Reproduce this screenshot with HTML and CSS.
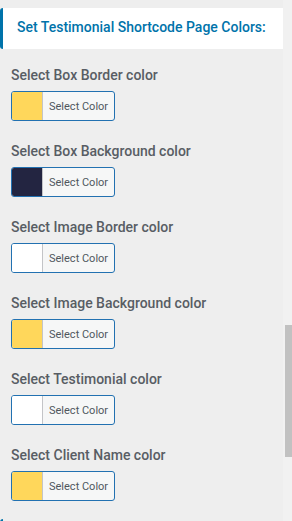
FILE: index.html
```html
<!DOCTYPE html>
<html lang="en">
<head>
    <meta charset="UTF-8">
    <meta name="viewport" content="width=device-width, initial-scale=1.0">
    <title>Testimonial Colors</title>
    <link rel="stylesheet" href="styles.css">
</head>
<body>
    <div class="page">
        <div class="content">
            <div class="section-title">Set Testimonial Shortcode Page Colors:</div>
            <div class="fields">
                <div class="field">
                    <label class="field-label">Select Box Border color</label>
                    <button type="button" class="color-btn"><span class="swatch yellow"></span><span class="color-text">Select Color</span></button>
                </div>
                <div class="field">
                    <label class="field-label">Select Box Background color</label>
                    <button type="button" class="color-btn"><span class="swatch navy"></span><span class="color-text">Select Color</span></button>
                </div>
                <div class="field">
                    <label class="field-label">Select Image Border color</label>
                    <button type="button" class="color-btn"><span class="swatch white"></span><span class="color-text">Select Color</span></button>
                </div>
                <div class="field">
                    <label class="field-label">Select Image Background color</label>
                    <button type="button" class="color-btn"><span class="swatch yellow"></span><span class="color-text">Select Color</span></button>
                </div>
                <div class="field">
                    <label class="field-label">Select Testimonial color</label>
                    <button type="button" class="color-btn"><span class="swatch white"></span><span class="color-text">Select Color</span></button>
                </div>
                <div class="field">
                    <label class="field-label">Select Client Name color</label>
                    <button type="button" class="color-btn"><span class="swatch yellow"></span><span class="color-text">Select Color</span></button>
                </div>
            </div>
            <div class="next-title"></div>
        </div>
        <div class="scrollbar">
            <div class="thumb"></div>
        </div>
    </div>
</body>
</html>
```

FILE: styles.css
```css
body {
  margin: 0;
  padding: 0;
  background-color: #eeeeee;
  font-family: Roboto, "Liberation Sans", Arial, sans-serif;
  overflow: hidden;
}

.page {
  display: flex;
  height: 521px;
}

.content {
  flex: 1;
  padding-top: 8px;
  overflow: hidden;
}

.section-title {
  height: 41px;
  display: flex;
  align-items: center;
  padding-left: 14px;
  padding-bottom: 3px;
  box-sizing: border-box;
  background-color: #fff;
  border-left: 3px solid #0073aa;
  border-radius: 3px 0 0 3px;
  color: #0073aa;
  font-size: 14px;
  font-weight: 500;
}

.fields {
  display: flex;
  flex-direction: column;
  gap: 20px;
  padding: 16px 11px 0;
}

.field-label {
  display: block;
  line-height: 20px;
  margin-bottom: 6px;
  color: #585d64;
  font-size: 14px;
  font-weight: 500;
}

.color-btn {
  display: flex;
  width: 104px;
  height: 30px;
  padding: 0;
  border: 1px solid #2271b1;
  border-radius: 3px;
  background-color: #f6f7f7;
  overflow: hidden;
  cursor: pointer;
  font-family: inherit;
}

.swatch {
  width: 30px;
  height: 100%;
  flex-shrink: 0;
}

.yellow {
  background-color: #ffd75b;
}

.navy {
  background-color: #232541;
}

.white {
  background-color: #fff;
}

.color-text {
  flex: 1;
  height: 100%;
  display: flex;
  align-items: center;
  padding-left: 6px;
  border-left: 1px solid #c3c4c7;
  color: #50575e;
  font-size: 11px;
}

.next-title {
  margin-top: 18px;
  height: 30px;
  border-left: 3px solid #0073aa;
  border-radius: 3px 0 0 3px;
}

.scrollbar {
  width: 9px;
  background-color: #f1f1f1;
  padding-left: 2px;
  box-sizing: border-box;
}

.thumb {
  margin-top: 325px;
  height: 132px;
  background-color: #c1c1c1;
}
```
